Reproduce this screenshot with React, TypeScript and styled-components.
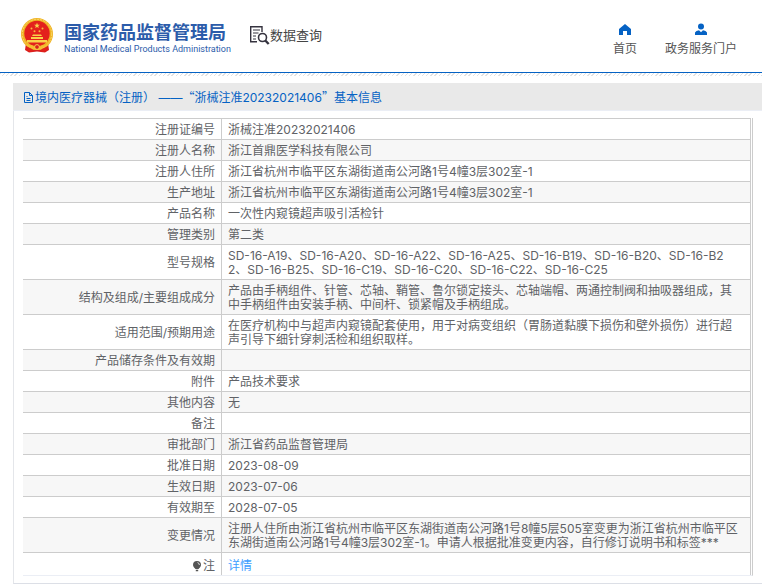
import React from "react";
import styled, { createGlobalStyle } from "styled-components";

const GlobalStyle = createGlobalStyle`
  * { box-sizing: border-box; }
  body {
    margin: 0;
    background: #fff;
    color: #606266;
    font-family: Inter, "Noto Sans CJK SC", sans-serif;
    font-size: 12px;
    line-height: 14px;
  }
`;

const Header = styled.header`
  display: flex;
  align-items: flex-start;
  height: 73px;
  padding: 18px 25px 0 21px;
  border-bottom: 1px solid #0562c4;
`;

const Brand = styled.a`
  display: flex;
  gap: 11px;
  text-decoration: none;
  color: #2c5caa;
`;

const BrandText = styled.span`
  display: flex;
  flex-direction: column;
  padding-top: 2px;
`;

const BrandName = styled.span`
  font: 700 18px/22px "Noto Sans CJK SC", sans-serif;
  white-space: nowrap;
`;

const BrandSub = styled.span`
  width: 0;
  min-width: 100%;
  font: 400 9px/14px Roboto, sans-serif;
  white-space: nowrap;
`;

const Section = styled.h1`
  display: flex;
  align-items: center;
  margin: 7px 0 0 22px;
  font: 400 13px/20px "Noto Sans CJK SC", sans-serif;
  color: #444;
  white-space: nowrap;
`;

const Nav = styled.nav`
  display: flex;
  gap: 28px;
  margin-left: auto;
  padding-top: 5px;
`;

const NavLink = styled.a`
  display: flex;
  flex-direction: column;
  align-items: center;
  gap: 4px;
  color: #555;
  text-decoration: none;
  line-height: 18px;
  white-space: nowrap;

  svg { color: #0562c4; }
`;

const Hatch = styled.div`
  height: 3px;
  margin-bottom: 7px;
  background: repeating-linear-gradient(135deg, #e2e2e2 0 1px, #fff 1px 3px);
`;

const Panel = styled.main`
  margin-left: 13px;
  border-left: 1px solid #e4e6ea;
  border-bottom: 1px solid #dcdfe6;
  padding-bottom: 7px;
`;

const Title = styled.h2`
  display: flex;
  align-items: center;
  height: 28px;
  margin: 0 0 7px -1px;
  padding: 2px 0 0 10px;
  background: #e9e9e9;
  border-bottom: 1px solid #ebeef5;
  color: #0562c4;
  font-size: 12px;
  font-weight: 400;
  white-space: pre;
`;

const WideMark = styled.span`
  font-family: "Noto Sans CJK SC", sans-serif;
`;

const TableFrame = styled.div`
  margin: 0 9px;
  border-right: 1px solid #ccc;
  padding-right: 1px;
  border-bottom: 1px solid #ebeef5;
`;

const Table = styled.table`
  width: 100%;
  border-collapse: separate;
  border-spacing: 0;
  table-layout: fixed;
  border-top: 1px solid #ccc;
  border-right: 1px solid #ccc;
`;

const Row = styled.tr`
  &:nth-child(even) { background: #f7f7f7; }
  &:not(:last-child) > * { border-bottom: 1px solid #ccc; }
  &:last-child > * { padding-top: 6px; }
`;

const Label = styled.th`
  width: 199px;
  padding: 4px 6px 2px;
  border-right: 1px solid #ccc;
  font-weight: 400;
  text-align: right;
`;

const Value = styled.td`
  padding: 4px 9px 2px 6px;
  word-break: break-all;
`;

const DetailLink = styled.a`
  color: #409eff;
  text-decoration: none;
`;

const Note = styled.span`
  display: inline-flex;
  align-items: center;
  vertical-align: top;
  gap: 1px;
`;

const Emblem = () => (
  <svg width="32" height="35" viewBox="0 0 32 35" aria-hidden="true">
    <path d="M5 25h22l1 7-4 2.5-8-1-8 1L4 32z" fill="#d9201d" />
    <circle cx="16" cy="16" r="16" fill="#f0b323" />
    <circle cx="16" cy="16" r="14.7" fill="none" stroke="#f9d96b" strokeWidth="1" strokeDasharray="2 1" />
    <circle cx="16" cy="15.5" r="12.7" fill="#e3211c" />
    <path d="M16 4.7l.8 2h2.1l-1.7 1.3.6 2.1-1.8-1.2-1.8 1.2.6-2.1-1.7-1.3h2.1z" fill="#f8d34d" />
    <g fill="#f8ba40">
      <circle cx="10.5" cy="10.5" r="1" /><circle cx="21.5" cy="10.5" r="1" />
      <circle cx="13.5" cy="13.3" r="1" /><circle cx="18.5" cy="13.3" r="1" />
    </g>
    <path d="M11 18l1-1.5h8l1 1.5zM10 19h12v2H10zM6 22h20v2.5H6z" fill="#f9d24a" />
    <path d="M4 25q4 3 7 2l2 2.5q3-2 6 0l2-2.5q3 1 7-2l-1 2-5 2.5-2 2h-8l-2-2-5-2.5z" fill="#f4be32" />
    <circle cx="16" cy="29" r="2.4" fill="#d9201d" stroke="#f9d24a" />
    <path d="M6 29l5 2 1 3-5-1zM26 29l-5 2-1 3 5-1z" fill="#e3211c" />
  </svg>
);

const SearchDocIcon = () => (
  <svg width="22" height="20" viewBox="0 0 22 20" fill="none" stroke="#35333f" aria-hidden="true">
    <path d="M14 7V1.7H2.7v15H9" strokeWidth="1.4" />
    <path d="M5 5h7M5 8h5.5M5 11h3M5 14h3" />
    <circle cx="14.5" cy="12.5" r="4" strokeWidth="1.6" />
    <path d="M17.3 15.5l3.4 3.5" strokeWidth="2.4" />
  </svg>
);

const HomeIcon = () => (
  <svg width="12" height="13" viewBox="0 0 12 13" fill="currentColor" aria-hidden="true">
    <path d="M6 1l6 5v6H8V8H4v4H0V6z" />
  </svg>
);

const UserIcon = () => (
  <svg width="12" height="13" viewBox="0 0 12 13" fill="currentColor" aria-hidden="true">
    <circle cx="6" cy="3.5" r="3" />
    <path d="M0 12V9.5Q1 7.5 4 7.2l2 2 2-2q3 .3 4 2.3V12z" />
  </svg>
);

const DocIcon = () => (
  <svg width="12" height="12" viewBox="0 0 12 12" fill="none" stroke="currentColor" aria-hidden="true">
    <path d="M1.5.5h5l3 3v7h-8zM6.5.5v3h3M3.5 4.5h1M3.5 6.5h4M3.5 8.5h4" />
  </svg>
);

const BulbIcon = () => (
  <svg width="10" height="12" viewBox="0 0 10 12" aria-hidden="true">
    <path d="M5 1a4 4 0 0 0-4 4c0 2 2 3 2.4 4h3.2C7 8 9 7 9 5a4 4 0 0 0-4-4zM3.8 9.7h2.4v1.5H3.8z" fill="#555" />
    <path d="M5.5 2.6Q7.3 3 7.4 5" fill="none" stroke="#fff" strokeWidth=".8" />
  </svg>
);

const records: [string, string][] = [
  ["注册证编号", "浙械注准20232021406"],
  ["注册人名称", "浙江首鼎医学科技有限公司"],
  ["注册人住所", "浙江省杭州市临平区东湖街道南公河路1号4幢3层302室-1"],
  ["生产地址", "浙江省杭州市临平区东湖街道南公河路1号4幢3层302室-1"],
  ["产品名称", "一次性内窥镜超声吸引活检针"],
  ["管理类别", "第二类"],
  ["型号规格", "SD-16-A19、SD-16-A20、SD-16-A22、SD-16-A25、SD-16-B19、SD-16-B20、SD-16-B22、SD-16-B25、SD-16-C19、SD-16-C20、SD-16-C22、SD-16-C25"],
  ["结构及组成/主要组成成分", "产品由手柄组件、针管、芯轴、鞘管、鲁尔锁定接头、芯轴端帽、两通控制阀和抽吸器组成，其中手柄组件由安装手柄、中间杆、锁紧帽及手柄组成。"],
  ["适用范围/预期用途", "在医疗机构中与超声内窥镜配套使用，用于对病变组织（胃肠道黏膜下损伤和壁外损伤）进行超声引导下细针穿刺活检和组织取样。"],
  ["产品储存条件及有效期", ""],
  ["附件", "产品技术要求"],
  ["其他内容", "无"],
  ["备注", ""],
  ["审批部门", "浙江省药品监督管理局"],
  ["批准日期", "2023-08-09"],
  ["生效日期", "2023-07-06"],
  ["有效期至", "2028-07-05"],
  ["变更情况", "注册人住所由浙江省杭州市临平区东湖街道南公河路1号8幢5层505室变更为浙江省杭州市临平区东湖街道南公河路1号4幢3层302室-1。申请人根据批准变更内容，自行修订说明书和标签***"],
];

export default function App() {
  return (
    <>
      <GlobalStyle />
      <Header>
        <Brand href="#">
          <Emblem />
          <BrandText>
            <BrandName>国家药品监督管理局</BrandName>
            <BrandSub>National Medical Products Administration</BrandSub>
          </BrandText>
        </Brand>
        <Section><SearchDocIcon />数据查询</Section>
        <Nav>
          <NavLink href="#"><HomeIcon />首页</NavLink>
          <NavLink href="#"><UserIcon />政务服务门户</NavLink>
        </Nav>
      </Header>
      <Hatch />
      <Panel>
        <Title>
          <DocIcon />
          <span>
            境内医疗器械（注册） ——<WideMark>“</WideMark>浙械注准20232021406<WideMark>”</WideMark>基本信息
          </span>
        </Title>
        <TableFrame>
          <Table>
            <tbody>
              {records.map(([label, value]) => (
                <Row key={label}>
                  <Label scope="row">{label}</Label>
                  <Value>{value}</Value>
                </Row>
              ))}
              <Row>
                <Label scope="row"><Note><BulbIcon />注</Note></Label>
                <Value><DetailLink href="#">详情</DetailLink></Value>
              </Row>
            </tbody>
          </Table>
        </TableFrame>
      </Panel>
    </>
  );
}
